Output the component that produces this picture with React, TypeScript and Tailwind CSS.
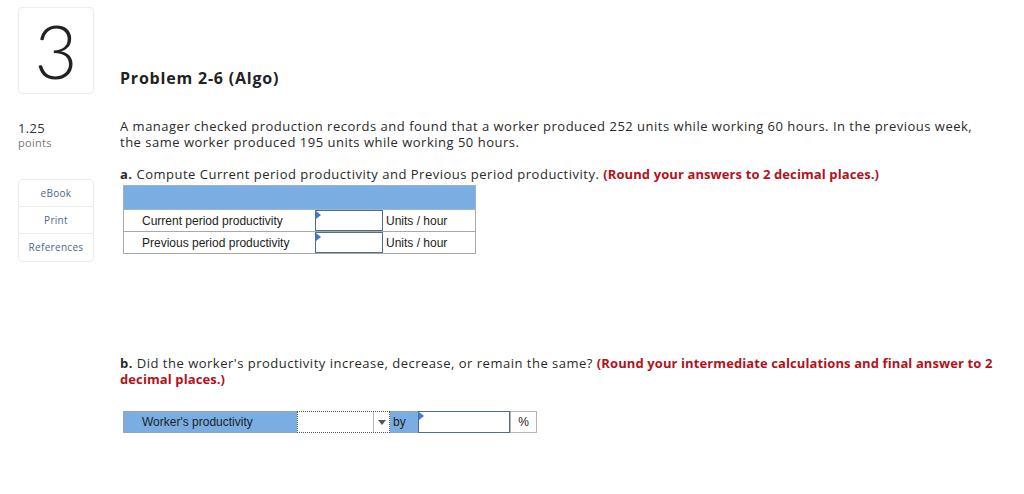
import React from "react";

const body = { fontFamily: "'Open Sans', 'Noto Sans', sans-serif" };
const arial = { fontFamily: "'Liberation Sans', Arial, sans-serif" };

function Marker() {
  return (
    <svg className="absolute left-0 top-0" width="6" height="8" viewBox="0 0 6 8">
      <path d="M0 0 L5 4 L0 8 Z" fill="#3a7bd5" />
    </svg>
  );
}

function AnswerInput({ className }: { className: string }) {
  return <div className={"relative bg-white border-[1.5px] border-[#4f6e8e] " + className}><Marker /></div>;
}

export default function App() {
  return (
    <div className="flex min-h-[494px] bg-white pl-[18px] pt-[7px] text-[#1f1f1f]" style={body}>
      {/* sidebar */}
      <div className="w-[76px] shrink-0">
        <div className="flex h-[87px] items-center justify-center rounded-[4px] border border-[#ececec]">
          <span className="text-[74px] font-light leading-none text-[#222]" style={{ fontFamily: "Lato, sans-serif" }}>3</span>
        </div>
        <div className="mt-[26px] text-[13px] leading-[16px] tracking-[0.3px] text-[#333]">1.25</div>
        <div className="text-[11px] leading-[14px] tracking-[0.3px] text-[#777]">points</div>
        <div className="mt-[29px] flex flex-col rounded-[4px] border border-[#ececec] text-[10px] tracking-[0.3px] text-[#4a6a8c]">
          <div className="flex h-[27px] items-center justify-center border-b border-[#ececec]">eBook</div>
          <div className="flex h-[27px] items-center justify-center border-b border-[#ececec]">Print</div>
          <div className="flex h-[27px] items-center justify-center">References</div>
        </div>
      </div>

      {/* main */}
      <div className="ml-[26px] flex-1 pr-[30px]">
        <h1 className="mt-[60px] text-[16px] font-bold leading-[22px] tracking-[0.8px] text-[#222]">Problem 2-6 (Algo)</h1>
        <p className="mt-[29px] text-[13px] leading-[16px] tracking-[0.5px] text-[#2a2a2a]">
          A manager checked production records and found that a worker produced 252 units while working 60 hours. In the previous week, the same worker produced 195 units while working 50 hours.
        </p>
        <p className="mt-[16px] text-[13px] leading-[16px] tracking-[0.5px] text-[#2a2a2a]">
          <span className="font-bold">a.</span> Compute Current period productivity and Previous period productivity.{" "}
          <span className="font-bold tracking-[0.1px] text-[#b3111b]">(Round your answers to 2 decimal places.)</span>
        </p>

        <div className="ml-[3px] mt-[3px] w-[353px] text-[12px] text-[#222]" style={arial}>
          <div className="h-[25px] border border-[#9db4cc] bg-[#7aaee2]" />
          <div className="flex h-[22px] border-x border-b border-[#a9a9a9]">
            <div className="flex w-[191px] items-center pl-[18px]">Current period productivity</div>
            <AnswerInput className="w-[68px]" />
            <div className="flex flex-1 items-center pl-[3px]">Units / hour</div>
          </div>
          <div className="flex h-[22px] border-x border-b border-[#a9a9a9]">
            <div className="flex w-[191px] items-center pl-[18px]">Previous period productivity</div>
            <AnswerInput className="w-[68px]" />
            <div className="flex flex-1 items-center pl-[3px]">Units / hour</div>
          </div>
        </div>

        <p className="mt-[101px] text-[13px] leading-[16px] tracking-[0.5px] text-[#2a2a2a]">
          <span className="font-bold">b.</span> Did the worker's productivity increase, decrease, or remain the same?{" "}
          <span className="font-bold tracking-[0.1px] text-[#b3111b]">(Round your intermediate calculations and final answer to 2 decimal places.)</span>
        </p>

        <div className="ml-[3px] mt-[24px] flex h-[22px] w-[414px] text-[12px] text-[#222]" style={arial}>
          <div className="flex w-[174px] items-center border-y border-l border-[#8fa6bd] bg-[#7aaee2] pl-[18px]">Worker's productivity</div>
          <div className="flex w-[93px] items-stretch border border-dotted border-[#555] bg-white">
            <div className="flex-1" />
            <div className="flex w-[16px] items-center justify-center border-l border-[#bbb]">
              <svg width="8" height="5" viewBox="0 0 8 5"><path d="M0 0 L8 0 L4 5 Z" fill="#555" /></svg>
            </div>
          </div>
          <div className="flex w-[28px] items-center bg-[#7aaee2] pl-[3px] border-y border-[#8fa6bd]">by</div>
          <AnswerInput className="w-[92px]" />
          <div className="flex flex-1 items-center justify-center border border-[#b5b5b5] bg-white">%</div>
        </div>
      </div>
    </div>
  );
}
